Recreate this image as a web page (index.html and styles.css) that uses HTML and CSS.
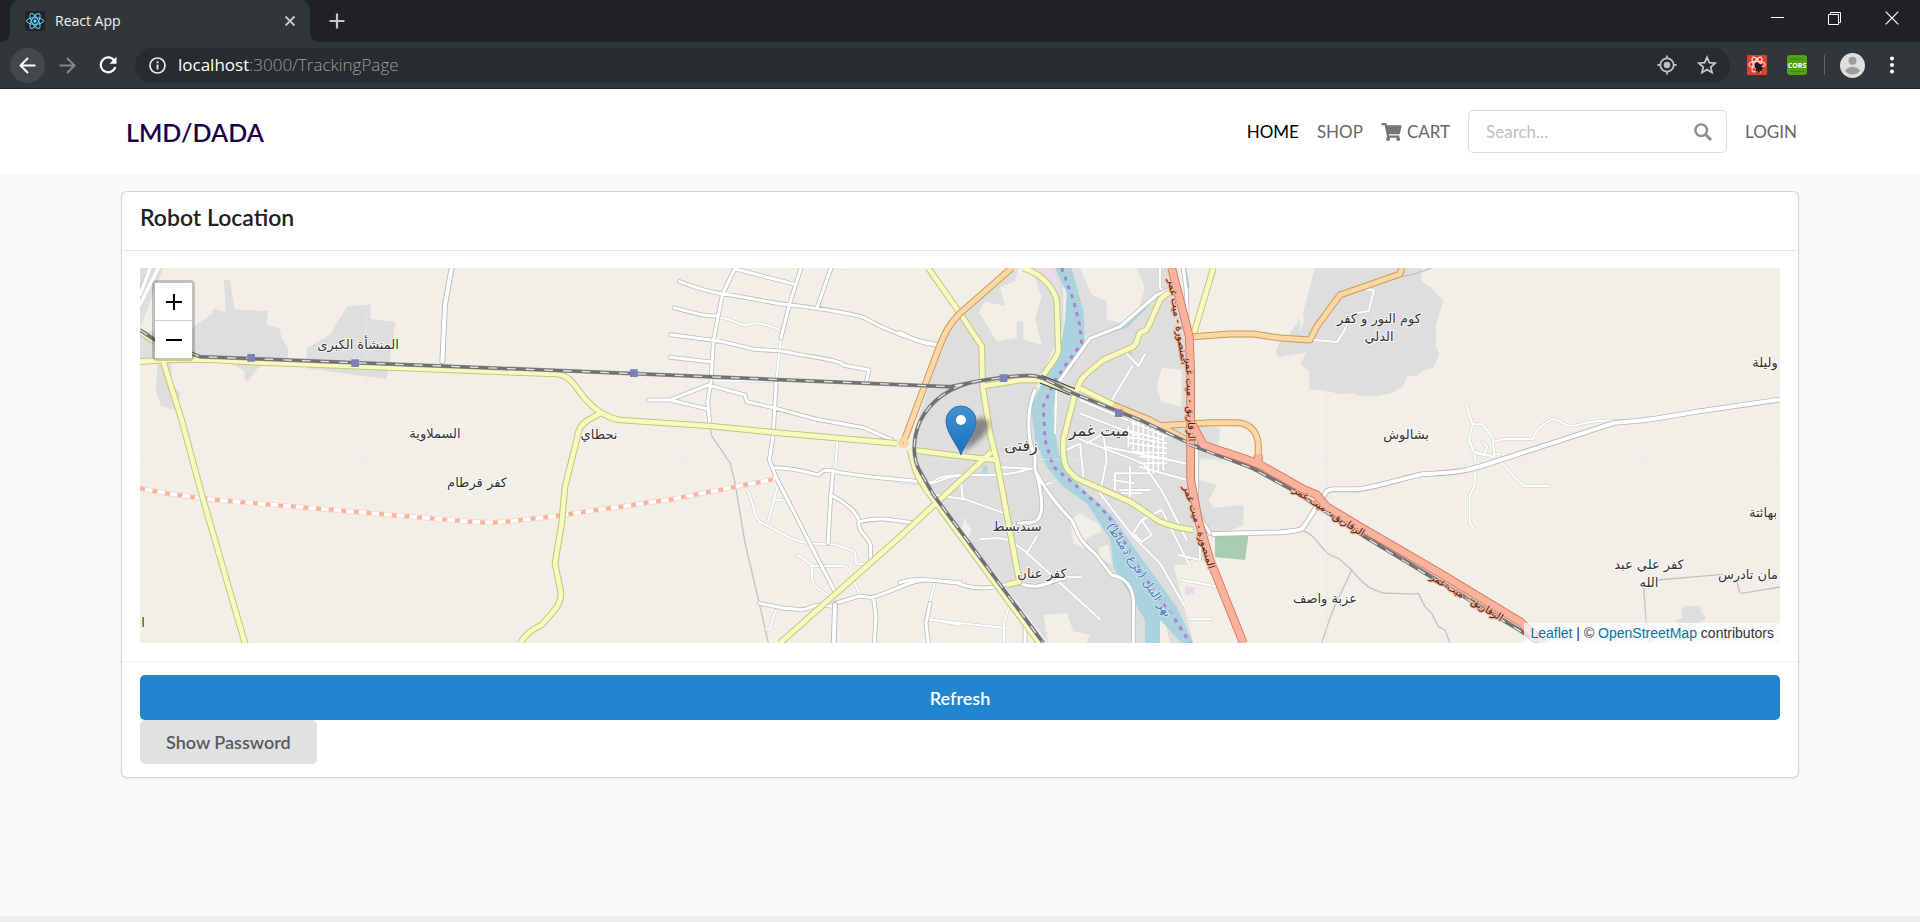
FILE: index.html
```html
<!DOCTYPE html>
<html lang="en">
<head>
<meta charset="utf-8">
<title>React App</title>
<link rel="stylesheet" href="styles.css">
</head>
<body>
<div class="browser">
  <div class="tabstrip">
    <div class="tab">
      <svg class="favicon" viewBox="0 0 20 20"><rect width="20" height="20" rx="2" fill="#20232a"/><g fill="none" stroke="#61dafb" stroke-width="1"><ellipse cx="10" cy="10" rx="8.500" ry="3.300"/><ellipse cx="10" cy="10" rx="8.500" ry="3.300" transform="rotate(60 10 10)"/><ellipse cx="10" cy="10" rx="8.500" ry="3.300" transform="rotate(120 10 10)"/></g><circle cx="10" cy="10" r="1.700" fill="#61dafb"/></svg>
      <span class="tab-title">React App</span>
      <button class="icon-btn tab-close" aria-label="Close tab"><svg width="12" height="12" viewBox="0 0 12 12"><path d="M1.500 1.500l9 9M10.500 1.500l-9 9" stroke="#c4c7ca" stroke-width="1.800"/></svg></button>
    </div>
    <button class="icon-btn new-tab" aria-label="New tab"><svg width="16" height="16" viewBox="0 0 16 16"><path d="M8 .5v15M.5 8h15" stroke="#c4c7ca" stroke-width="2.200"/></svg></button>
    <div class="window-buttons">
      <button class="icon-btn" aria-label="Minimize"><svg width="14" height="14" viewBox="0 0 14 14"><path d="M0 6.500h13" stroke="#fff"/></svg></button>
      <button class="icon-btn" aria-label="Restore"><svg width="14" height="14" viewBox="0 0 14 14" fill="none" stroke="#fff"><path d="M.5 3.500h10v10H.5zM2.500 3V1.500h10v10H11"/></svg></button>
      <button class="icon-btn" aria-label="Close window"><svg width="14" height="14" viewBox="0 0 14 14"><path d="M.7.7l12.600 12.600M13.300.7L.7 13.300" stroke="#fff" stroke-width="1.200"/></svg></button>
    </div>
  </div>
  <div class="toolbar">
    <button class="icon-btn round back" aria-label="Back"><svg width="17" height="17" viewBox="0 0 17 17" fill="none" stroke="#fff" stroke-width="2"><path d="M16.500 8.500H2M9 1L1.500 8.500 9 16"/></svg></button>
    <button class="icon-btn round" aria-label="Forward"><svg width="17" height="17" viewBox="0 0 17 17" fill="none" stroke="#86898c" stroke-width="2"><path d="M.5 8.500H15M8 1l7.500 7.500L8 16"/></svg></button>
    <button class="icon-btn round" aria-label="Reload"><svg width="18" height="18" viewBox="0 0 18 18"><path d="M15.200 4.500A7.400 7.400 0 1 0 16.300 11" fill="none" stroke="#fff" stroke-width="2.200"/><path d="M17.500.8v7h-7z" fill="#fff"/></svg></button>
    <div class="omnibox">
      <svg width="17" height="17" viewBox="0 0 17 17"><circle cx="8.500" cy="8.500" r="7.500" fill="none" stroke="#e8eaed" stroke-width="1.700"/><path d="M8.500 7.500v5M8.500 4.300v1.900" stroke="#e8eaed" stroke-width="1.800"/></svg>
      <span class="url"><span class="host">localhost</span>:3000/TrackingPage</span>
      <button class="icon-btn locate" aria-label="Location"><svg width="20" height="20" viewBox="0 0 20 20" fill="none" stroke="#bdc1c4" stroke-width="1.800"><circle cx="10" cy="10" r="6.700"/><path d="M10 .5v3M10 16.500v3M.5 10h3M16.500 10h3"/><circle cx="10" cy="10" r="3.300" fill="#bdc1c4" stroke="none"/></svg></button>
      <button class="icon-btn" aria-label="Bookmark"><svg width="20" height="20" viewBox="0 0 20 20"><path d="M10 2.200l2.300 5.400 5.900.5-4.500 3.900 1.400 5.700L10 14.600l-5.100 3.100L6.300 12 1.800 8.100l5.900-.5z" fill="none" stroke="#c6c9cc" stroke-width="1.700"/></svg></button>
    </div>
    <div class="extensions">
      <svg width="20" height="20" viewBox="0 0 20 20"><rect width="20" height="20" rx="1" fill="#d9402f"/><g fill="none" stroke="#fbe4e0" stroke-width="1.100"><ellipse cx="10" cy="9.500" rx="8.300" ry="3.200"/><ellipse cx="10" cy="9.500" rx="8.300" ry="3.200" transform="rotate(60 10 9.500)"/><ellipse cx="10" cy="9.500" rx="8.300" ry="3.200" transform="rotate(120 10 9.500)"/></g><path d="M8 8.500l3-1 1.500 1.500 3 .5-1 2 2 1.500-1.500 1.500.5 2.500-2-1-2 2-1-2-2 .5.500-3-1.500-1z" fill="#231815"/></svg>
      <svg width="20" height="20" viewBox="0 0 20 20"><rect width="20" height="20" rx="3" fill="#4fa50f"/><path d="M3 4h14M3 16.500h14" stroke="#3c860a" stroke-width="1.200"/><text class="cors" x="10" y="13" text-anchor="middle">CORS</text></svg>
    </div>
    <button class="icon-btn profile" aria-label="Profile"><svg width="25" height="25" viewBox="0 0 25 25"><circle cx="12.500" cy="12.500" r="12.500" fill="#dedede"/><circle cx="12.500" cy="7.800" r="4" fill="#9d9d9d"/><path d="M5 17.800c2-5.200 13-5.200 15 0-2.600 4.900-12.400 4.900-15 0z" fill="#9d9d9d"/></svg></button>
    <button class="icon-btn kebab" aria-label="Menu"><svg width="4" height="18" viewBox="0 0 4 18" fill="#fff"><circle cx="2" cy="2.500" r="2"/><circle cx="2" cy="9" r="2"/><circle cx="2" cy="15.500" r="2"/></svg></button>
  </div>
</div>

<header class="site-header">
  <nav class="container nav">
    <a class="brand" href="#">LMD/DADA</a>
    <div class="menu">
      <a class="active" href="#">HOME</a>
      <a href="#">SHOP</a>
      <a class="cart" href="#"><svg width="21" height="18" viewBox="0 0 576 512" fill="#767676"><path d="M528.120 301.319l47.273-208C578.806 78.301 567.391 64 551.990 64H159.208l-9.166-44.810C147.758 8.021 137.930 0 126.529 0H24C10.745 0 0 10.745 0 24v16c0 13.255 10.745 24 24 24h69.883l70.248 343.435C147.325 417.100 136 435.222 136 456c0 30.928 25.072 56 56 56s56-25.072 56-56c0-15.674-6.447-29.835-16.824-40h209.647C430.447 426.165 424 440.326 424 456c0 30.928 25.072 56 56 56s56-25.072 56-56c0-22.172-12.888-41.332-31.579-50.405l5.517-24.276c3.413-15.018-8.002-29.319-23.403-29.319H218.117l-6.545-32h293.145c11.206 0 20.920-7.754 23.403-18.681z"/></svg>CART</a>
      <div class="search">
        <input type="text" placeholder="Search..." aria-label="Search">
        <svg width="18" height="18" viewBox="0 0 18 18" fill="none" stroke="#8e8e8e"><circle cx="7.200" cy="7.200" r="5.800" stroke-width="2.400"/><path d="M11.500 11.500l5.500 5.500" stroke-width="2.900"/></svg>
      </div>
      <a href="#">LOGIN</a>
    </div>
  </nav>
</header>

<main class="page">
  <section class="container card">
    <h1 class="card-title">Robot Location</h1>
    <div class="card-body">
      <div class="map">
        <svg class="map-canvas" viewBox="0 0 1640 375" preserveAspectRatio="xMidYMid slice" role="img" aria-label="Map of Zefta and Mit Ghamr">
          <defs>
            <linearGradient id="pin" x1="0" y1="0" x2="0" y2="1"><stop offset="0" stop-color="#3f94d1"/><stop offset="1" stop-color="#1d6cbf"/></linearGradient>
            <filter id="soft" x="-30%" y="-30%" width="160%" height="160%"><feGaussianBlur stdDeviation="2.500"/></filter>
            <g id="minor">
              <g transform="translate(1260 -24)">
                <path d="M860 24l-10 0M832 545l-6 70-10 15M655 670l-32 120M640 718l50 6M560 690c30 40 10 90 60 106 60 30 80 50 140 55l60 2c80 25 65 15 68 58l38 0M712 884l45 33 100 2c20 10 20 50 45 85M757 919c-5 60 0 55 50 88M650 1048c-20 40-15 50-20 60h-12M1125 965l-28 110 103 20M475 172c40 5 60 20 85 25 20-15 60-5 105 15M665 212l-15 140M1090 665c40 15 50-15 110-18M455 362h170c30 0 28 10 25 35"/>
              </g>
              <g transform="translate(2280 -24)">
                <path d="M0 665c50 8 75 5 100 0 40-40 180 0 285-38M183 665l5 50 50 18 70 25M110 705l78 12M240 838c80-10 90 0 140 40l220 200M410 830l-30 50M300 622l105 4M450 950l95 2M0 785l30 3M75 1078l235 25M330 1030l-18 60v55M780 24v60l30 20M680 280l35 38 20-35M697 318l-60 100M410 640l20 36 25-8M470 380l-5 140M520 450l-30 110M540 460l180 70M540 420l260 110M520 530l210 80 60 90 70 140M560 550l50-30 10 80-20 100M500 570l40-20 10 100M615 560l240 50M720 620l140 40M645 690v-50h100M690 620v90M665 700h60M845 960l110 20M870 1078h65M835 885l65 15v-70M600 700l100 130 80 80 75 130M700 820l25-40 60-30 25 50 60 120M725 780l30 45-30 20-20-20M685 500v60M700 480v90M715 480v100M730 480v110M745 490v140M760 490v150M775 510v120M790 530v100M680 510l110 30M680 530l120 20M690 550l110 14M700 575l100 5M720 590l80 5M720 610h80M640 660l60 10M660 690h90"/>
              </g>
              <g transform="translate(3300 -24)">
                <path d="M370 86l32 5-16 62-50 8-25 55-20 30-75-7M678 433l20 60-12 50 17 35 5 40-5 60-14 30v80l10 15M698 493h30l30 40 5 60M758 545l35-8 87 0c10-40 30-40 55-60 30 0 40 25 60 20 30 0 50-20 135-15M770 600c30 10 40 50 85 78h75M690 545l12 30 60 15M727 545l15 15-10 25-20-3M765 583h12v15"/>
              </g>
            </g>
            <g id="streets">
              <g transform="translate(1260 -24)">
                <path d="M525 24l-38 80-27 140-7 120-10 60 7 75M723 24l-35 110-25 100M813 24l-43 122M530 28l170 44M358 64c60 25 100 35 160 42l140 25c90 10 170 20 250 40 70 40 150 70 220 82M342 143c90 25 100 25 130 25M332 224l150 20 100 24 80 5c100 20 170 25 190 43l75 14-7 30M330 292l125 14M265 420h65l115-45 110 30 5 20 80 18 130 35 140 25 85 37M330 420l110 26M648 370l-8 150-12 80 10 25 10 27 180 350M640 623c50 0 110 15 135 22 20-20 25-15 50-10 80 15 160 20 255 30M820 630l-8 80-8 140M812 705c40 20 80 50 85 80-8 30 35 50 35 75v45M897 785c60-15 100-5 160 3M598 1030l75 15c40 0 40 10 70 0 30-15 50-10 80-5M825 1030l75-22 35 5c80-25 100-45 150-52 40-5 70 10 115 5M940 1010l8 60-5 79M1110 1030l-12 60 7 59"/>
              </g>
              <g transform="translate(2280 -24)">
                <path d="M0 218c40 20 70 35 110 37M0 968c40-15 80-10 170 0 40 20 100 20 150 5M360 970c60 25 90-10 135-15M375 1080v69M405 390c-30 70-20 160 0 200v40l10 30c10 50 20 110-10 125l-50 5M405 630c30 60 60 100 110 150 20 40 20 60 70 100l50 65c60 10 70 60 65 120v84M815 85l-45 20-110 95-90 35-90 125M850 24l10 80 2 110M890 560v160c5 60 30 80 40 100"/>
              </g>
            </g>
            <g id="tertiary">
              <path d="M3220 798l200-5c50-5 60-5 70-15l60-93c10-16 10-20 30-21h75c60-8 120-30 190-45 80-5 120-5 180-25l400-130c110-5 130-15 260-35l240-35M935 0l-20 110-8 170M2085 1010l-4 115"/>
            </g>
            <g id="yellow">
              <path d="M0 281C80 274 200 272 310 281L1250 318c40 5 50 30 80 68 30 35 60 60 110 70l270 18 190 19 370 33M2315 546l145 18 110 12M0 192l45 28M70 281l55 175 65 240 125 430M1380 436l-35 20c-25 15-30 30-35 60l-35 140-10 110-20 120 18 90c0 40-30 60-58 95-30 15-40 20-65 54M2365 0l95 136 65 98 3 122 22 140 20 80 68 365-38 10M2530 354l110-18h60l100 35M2650 0c60 20 90 60 100 96l5 150c0 15-20 40-45 75M2810 371c5-30 10-40 80-95l90-40c20-20 10-40 25-45 20 0 20-20 55-95 15-15 20-22 40-25M2805 376l-35 140c-3 80 10 90 40 115l160 70 90 60c30 12 60 20 100 25M2820 361l100 50M2555 551l-275 255-360 319M2310 546c15 60 20 80 50 120l338 459M3220 0l-60 201"/>
            </g>
            <g id="orange">
              <path d="M2615 0L2460 136c-35 35-45 60-60 95l-110 293M3160 206l110-8h70l80 12 90 6 20-40 70-95 180-63 5-18M2920 411l110 45 110 60M3060 473l150-9h80c40 0 65 30 65 70v42"/>
            </g>
            <g id="trunk">
              <path d="M3095 0l30 116 23 90 4 110v320l23 120 35 120 100 249M3152 460l38 71c50 20 100 30 170 59l130 74 40 16 30 36 100 60 240 140 240 145 70 64M3355 560v20"/>
            </g>
            <g id="rail">
              <path d="M0 186l45 30 115 42 20 8 1110 43 1140 47 90-18 70-10c60-6 90-10 120 3l90 45 200 80 160 75 180 70 120 65 100 65 100 65 480 290 60 44M2520 338c-90 14-150 62-180 122-22 50-24 110 0 150l40 70 330 445"/>
            </g>
          </defs>
          <g transform="scale(.333333)">
            <rect class="land" x="-3000" y="-1000" width="11000" height="3200"/>
            <g class="urban">
              <path d="M0 0h70L0 180z"/>
              <path d="M40 190l117-10 60-44v-10l10-5 20 10 10-5-5-90 18 0 14 88 100 6-5 40 40 10 5 30 20 30v30l-70 10-20 20-30 40-10-5v-25l-30-20-80-10H0v-90zM53 270l40 15 5 70 25 20-20 50-40-10-15-45z"/>
              <path d="M500 240l70-40 52-85 70-5v42l75 10-27 172-240-33z"/>
              <path d="M3525 0h320v40l30 20 35 40-22 70v65l10 25-20 40-25 5-25 20h-25l-15 30-30 20-50 10-15-2-35 0-25-8-30 5-35-10-60-7v-50l-25-25 15-35-85 15-5-20 20-40 50-10 15-40-5-20z"/>
              <path d="M4625 1025l10-12h45l5 22 10 5v15l-20 10h-50l-25-5 25-10z"/>
              <g transform="translate(2280 -24)">
                <path d="M340 24L180 160l-50 90-70 210-20 90 20 110 140 170 245 319-15-85 70-5 20 55 50 10-10 25h200V860L470 640l-70-120V400L490 200V24z"/>
                <path d="M515 24h310l25 120 20 340 90 20-5 50 25 25-15 25-65-10-10 65 60 15-25 50 15 20 90-10v60l-40 20-90 10 20 90h-100l60 235h-70L780 1020 640 780 470 620V400L560 240z"/>
                <path d="M1150 260l25-50 25-30v90z"/>
              </g>
            </g>
            <g class="land" transform="translate(2280 -24)">
              <path d="M300 80l45-15 10-41h40l30 90-20 60 20 80-55-15v-55l-20 0v50l-60 10-45-75-10-10 20-35 60 15z"/>
              <path d="M540 24h170l25 60-20 70-50 35-45-10 0-55-45-20z"/>
              <path d="M770 380l15-55h20l40 5v110l-60-15zM510 780l30-20 60 35 5 20-45 20-10 30-30-15zM600 860l25-5 10 60-40-30zM180 820l15-50 5 20 15 20-15 30zM845 940l35-50 55 25 45 60-60-10zM870 1070l70 0 20 79h-70z"/>
            </g>
            <path class="water" transform="translate(2280 -24)" d="M465 24h50l15 56 20 70 5 90-35 80-50 50-10 80 15 130 45 80 120 110 60 90 130 180 50 109h-35l-65-70v70h-45v-69l-95-160-8-80-72-110-70-50-50-60-35-80-12-100 27-60 60-110 15-90 5-80z"/>
            <path class="canal" d="M2840 215l120-40 60-60M3135 0l10 60M0 62L30 0"/>
            <g transform="translate(2280 -24)">
              <path fill="#a9cdb1" d="M945 828h100l-10 72-90-8z"/>
              <path fill="#a9dccb" d="M247 618h15v22h-15zM680 280l15-6 3 8-15 8z"/>
              <path fill="#ecd9e9" d="M400 24h50l20 30 10 50-25-30zM425 290l12-10 12 12-15 12zM855 980h28v22l-28 5zM555 315l15-7 8 10-20 15z"/>
            </g>
            <path class="ferry" transform="translate(2280 -24)" d="M485 24l35 96 20 80 5 50-45 60-40 60-30 70 5 100 25 80 60 50 80 70 50 60 50 100 80 120 40 50 50 79"/>
            <g class="track" transform="translate(1260 -24)"><path d="M450 498l5 30 55 80 15 60 30 180 40 170 30 130M3225 817"/></g>
            <g class="track" transform="translate(3300 -24)"><path d="M190 815c30 0 50 50 80 70l25 10 40 35c40 50 60 60 100 70 50-2 60 5 100 0l20 40 20 20 20 40 20 10 15 39M335 930l-60 130-30 89M575 24l-60 20-30 5M1250 960l200-17M1490 960l8 35 8 5 120-20M1210 970l8 110 10 69"/></g>
            <path class="tile" d="M679 0v1125M1639 0v1125M3560 300v825M4519 0v1125M0 574h4920"/>
            <use href="#minor" class="minor-case"/><use href="#minor" class="minor-fill"/>
            <use href="#streets" class="street-case"/><use href="#streets" class="street-fill"/>
            <use href="#tertiary" class="tertiary-case"/><use href="#tertiary" class="tertiary-fill"/>
            <path class="street-fill" d="M30 0L0 80M55 0L0 110"/>
            <g transform="translate(0 396)">
              <path class="planned-case" d="M0 265l90 17 130 17 700 60c60 5 120 12 180 6l140-16 360-52 305-60"/>
              <path class="planned-base" d="M0 265l90 17 130 17 700 60c60 5 120 12 180 6l140-16 360-52 305-60"/>
              <path class="planned" d="M0 265l90 17 130 17 700 60c60 5 120 12 180 6l140-16 360-52 305-60"/>
            </g>
            <use href="#yellow" class="yellow-case"/><use href="#yellow" class="yellow-fill"/>
            <use href="#orange" class="orange-case"/><use href="#orange" class="orange-fill"/>
            <circle cx="2290" cy="524" r="17" fill="#fcd6a4"/><circle cx="2290" cy="524" r="2" fill="#b98c50"/>
            <use href="#rail" class="rail-case"/><use href="#rail" class="rail-fill"/><use href="#rail" class="rail-dash"/>
            <use href="#trunk" class="trunk-case"/><use href="#trunk" class="trunk-fill"/>
            <g transform="translate(-3 8)">
              <path class="rail-fill" d="M3150 522l190 71 120 66 100 65 100 65 480 290 60 40"/>
              <path class="rail-dash" d="M3150 522l190 71 120 66 100 65 100 65 480 290 60 40"/>
            </g>
            <path d="M2705 322l100 40M2700 345l90 36" stroke="#333" stroke-width="3"/>
            <path class="station" d="M322 258h23v23h-23zM634 274h23v23h-23zM1470 304h23v23h-23zM2579 319h23v23h-23zM2925 424h23v23h-23z"/>
          </g>
          <g class="labels">
            <text x="218" y="81">المنشأة الكبرى</text>
            <text x="295" y="170">السملاوية</text>
            <text x="337" y="219">كفر قرطام</text>
            <text x="459" y="171">نحطاي</text>
            <text class="town" x="881" y="183">زفتى</text>
            <text class="town" x="959" y="168">ميت غمر</text>
            <text x="877" y="263">سندبسط</text>
            <text x="902" y="310">كفر عنان</text>
            <text x="1239" y="55">كوم النور و كفر</text>
            <text x="1239" y="73">الدلي</text>
            <text x="1266" y="171">بشالوش</text>
            <text x="1185" y="335">عزبة واصف</text>
            <text x="1625" y="99">وليلة</text>
            <text x="1623" y="249">بهائتة</text>
            <text x="1509" y="301">كفر علي عبد</text>
            <text x="1509" y="319">الله</text>
            <text x="1608" y="311">مان تادرس</text>
            <text x="3" y="359">ا</text>
            <text class="road" transform="translate(1035 54) rotate(81)">المنصورة - ميت غمر</text>
            <text class="road" transform="translate(1047 132) rotate(88)">الزقازيق - ميت غمر</text>
            <text class="road" transform="translate(1056 260) rotate(73)">المنصورة - ميت غمر</text>
            <text class="road" transform="translate(1187 246) rotate(33)">الزقازيق - ميت غمر</text>
            <text class="road" transform="translate(1325 332) rotate(31)">الزقازيق - ميت غمر</text>
            <text class="river" transform="translate(996 304) rotate(57)">نهر النيل (فرع دمياط)</text>
          </g>
          <path d="M823 184l10-30q9-8 16 0 2 12-26 30z" fill="#000" opacity=".4" filter="url(#soft)"/>
          <path d="M821 187c-2-8-15-22-15-34a15 15 0 0 1 30 0c0 12-13 26-15 34z" fill="url(#pin)" stroke="#2a6fab"/>
          <circle cx="821" cy="152" r="5" fill="#fff"/>
        </svg>
        <div class="zoom-control">
          <button aria-label="Zoom in"><svg width="16" height="16" viewBox="0 0 16 16"><path d="M8 0v16M0 8h16" stroke="#000" stroke-width="2"/></svg></button>
          <button aria-label="Zoom out"><svg width="16" height="16" viewBox="0 0 16 16"><path d="M0 8h16" stroke="#000" stroke-width="2"/></svg></button>
        </div>
        <div class="attribution"><a href="#">Leaflet</a> | © <a href="#">OpenStreetMap</a> contributors</div>
      </div>
    </div>
    <div class="card-actions">
      <button class="btn primary">Refresh</button>
      <button class="btn">Show Password</button>
    </div>
  </section>
</main>
<footer class="page-end"></footer>
</body>
</html>
```
FILE: styles.css
```css
* { box-sizing: border-box; }
body {
  margin: 0;
  min-height: 100vh;
  display: flex;
  flex-direction: column;
  background: #fafafa;
  font-family: Lato, "Liberation Sans", sans-serif;
  font-size: 17px;
}
button, input { font: inherit; }
a { text-decoration: none; color: inherit; }
svg { display: block; flex: none; }

/* Browser frame */
.browser { font-family: "Open Sans", "Noto Sans", sans-serif; background: #323639; border-bottom: 1px solid #202124; }
.icon-btn {
  display: flex; align-items: center; justify-content: center;
  padding: 0; border: 0; background: none;
}
.tabstrip { display: flex; height: 42px; background: #202124; padding-left: 10px; }
.tab {
  position: relative;
  display: flex; align-items: center; gap: 10px;
  width: 300px; padding: 0 14px 0 15px;
  background: #323639; border-radius: 10px 10px 0 0;
}
.tab::before, .tab::after {
  content: ""; position: absolute; bottom: 0; width: 10px; height: 10px;
}
.tab::before { left: -10px; background: radial-gradient(circle at 0 0, #202124 10px, #323639 10px); }
.tab::after { right: -10px; background: radial-gradient(circle at 100% 0, #202124 10px, #323639 10px); }
.favicon { width: 20px; height: 20px; }
.tab-title { color: #f1f3f4; font-size: 14px; line-height: 20px; flex: 1; }
.new-tab { width: 54px; }
.window-buttons { margin-left: auto; display: flex; height: 36px; }
.window-buttons .icon-btn { width: 57px; }
.toolbar { display: flex; align-items: center; height: 46px; padding: 0 10px; }
.round { width: 35px; height: 35px; border-radius: 50%; margin-right: 5px; }
.back { background: #45484b; }
.omnibox {
  flex: 1; display: flex; align-items: center; gap: 12px;
  height: 35px; margin: 0 17px 0 5px; padding: 0 13px 0 14px;
  border-radius: 18px; background: #282c2f;
}
.url { color: #9aa0a6; font-size: 17px; line-height: 24px; font-weight: 300; }
.host { color: #fff; font-weight: 400; }
.locate { margin-left: auto; margin-right: 8px; }
.extensions { display: flex; gap: 20px; padding-right: 17px; }
.cors { fill: #fff; font: bold 7px "Open Sans", sans-serif; }
.profile { border-left: 1px solid #5f6368; height: 20px; padding-left: 15px; }
.kebab { width: 37px; margin-left: 8px; }

/* Site header */
.container { width: calc(100% - 244px); margin: 0 auto; }
.site-header { background: #fff; }
.nav { display: flex; align-items: center; height: 85px; padding: 0 1px 0 4px; }
.brand { color: #1b0045; font-size: 25px; line-height: 30px; font-weight: 600; }
.menu { margin-left: auto; display: flex; align-items: center; gap: 18px; color: #666; }
.menu .active { color: #000; }
.cart { display: flex; align-items: center; gap: 5px; }
.search {
  display: flex; align-items: center;
  width: 259px; height: 43px; padding: 0 14px 0 17px;
  border: 1px solid #dcdcdd; border-radius: 5px;
}
.search input { flex: 1; min-width: 0; border: 0; padding: 0; outline: 0; background: none; color: #333; }
.search input::placeholder { color: #bfbfbf; opacity: 1; }

/* Card */
.page { flex: 1; padding: 18px 0 24px; }
.card {
  background: #fff; border-radius: 5px;
  box-shadow: 0 1px 3px 0 #d4d4d5, 0 0 0 1px #d4d4d5;
}
.card-title {
  margin: 0; padding: 11px 18px 18px; border-bottom: 1px solid #e4e4e4;
  font-size: 23px; line-height: 29px; font-weight: 600; color: #212121;
}
.card-body { padding: 17px 18px 18px; border-bottom: 1px solid #f0f0f0; }
.card-actions { padding: 13px 18px; display: flex; flex-direction: column; align-items: flex-start; }
.btn {
  height: 44px; padding: 0 26px; border: 0; border-radius: 5px;
  background: #e0e1e2; color: #5a5a5a; font-size: 18px; font-weight: 600;
}
.btn.primary { width: 100%; height: 45px; background: #2185d0; color: #fff; }
.page-end { height: 6px; background: #eee; }

/* Map */
.map { position: relative; height: 375px; overflow: hidden; }
.map-canvas { width: 100%; height: 100%; }
.zoom-control {
  position: absolute; left: 12px; top: 12px;
  border: 3px solid rgba(0, 0, 0, .2); border-radius: 5px; background-clip: padding-box;
}
.zoom-control button {
  display: flex; align-items: center; justify-content: center;
  width: 37px; height: 37px; padding: 0; border: 0; background: #fff;
}
.zoom-control button:first-child { height: 38px; border-bottom: 1px solid #ccc; }
.attribution {
  position: absolute; right: 0; bottom: 0; padding: 0 6px;
  background: rgba(255, 255, 255, .7); color: #333;
  font: 14px/20px "Liberation Sans", Arial, sans-serif;
}
.attribution a { color: #0078a8; }

.map-canvas use { stroke-linejoin: round; }
.land { fill: #f2efe9; }
.urban { fill: #dedede; }
.water { fill: #aad3df; }
.canal { fill: none; stroke: #aad3df; stroke-width: 8px; }
.ferry { fill: none; stroke: #b07fc8; stroke-width: 9px; stroke-dasharray: 12px 16px; }
.track { fill: none; stroke: #c2c2c2; stroke-width: 4px; }
.tile { fill: none; stroke: #ebe9e5; stroke-width: 2px; }
.minor-case, .minor-fill, .street-case, .street-fill, .tertiary-case, .tertiary-fill { fill: none; stroke-linecap: round; }
.minor-case { stroke: #cbcbcb; stroke-width: 9px; }
.minor-fill { stroke: #fff; stroke-width: 6px; }
.street-case { stroke: #bdbdbd; stroke-width: 14px; }
.street-fill { stroke: #fff; stroke-width: 9px; }
.tertiary-case { stroke: #b5b5b5; stroke-width: 17px; }
.tertiary-fill { stroke: #fff; stroke-width: 12px; }
.planned-case { fill: none; stroke: #fbd5c9; stroke-width: 16px; }
.planned-base { fill: none; stroke: #fff; stroke-width: 11px; }
.planned { fill: none; stroke: #f9b29c; stroke-width: 12px; stroke-dasharray: 15px 23px; }
.yellow-case, .yellow-fill, .orange-case, .orange-fill, .trunk-case, .trunk-fill, .rail-case, .rail-fill, .rail-dash { fill: none; }
.yellow-case { stroke: #bfc87c; stroke-width: 20px; }
.yellow-fill { stroke: #f7fabf; stroke-width: 14px; }
.orange-case { stroke: #c99c56; stroke-width: 21px; }
.orange-fill { stroke: #fcd6a4; stroke-width: 15px; }
.trunk-case { stroke: #dc6b52; stroke-width: 26px; }
.trunk-fill { stroke: #f9b29c; stroke-width: 21px; }
.rail-case { stroke: #9c9c9c; stroke-width: 12px; }
.rail-fill { stroke: #707070; stroke-width: 9px; }
.rail-dash { stroke: #e4e4e4; stroke-width: 4px; stroke-dasharray: 26px 30px; }
.station { fill: #7a81b4; }
.labels text {
  font: 13px "DejaVu Sans", sans-serif; text-anchor: middle;
  fill: #333; stroke: rgba(255, 255, 255, .8); stroke-width: 2px; paint-order: stroke; stroke-linejoin: round;
}
.labels .town { font-size: 16px; }
.labels .road { font-size: 10px; stroke: #f9b29c; fill: #3d1a12; }
.labels .river { font-size: 12px; fill: #5578bd; stroke: #d3e8ee; }
```
